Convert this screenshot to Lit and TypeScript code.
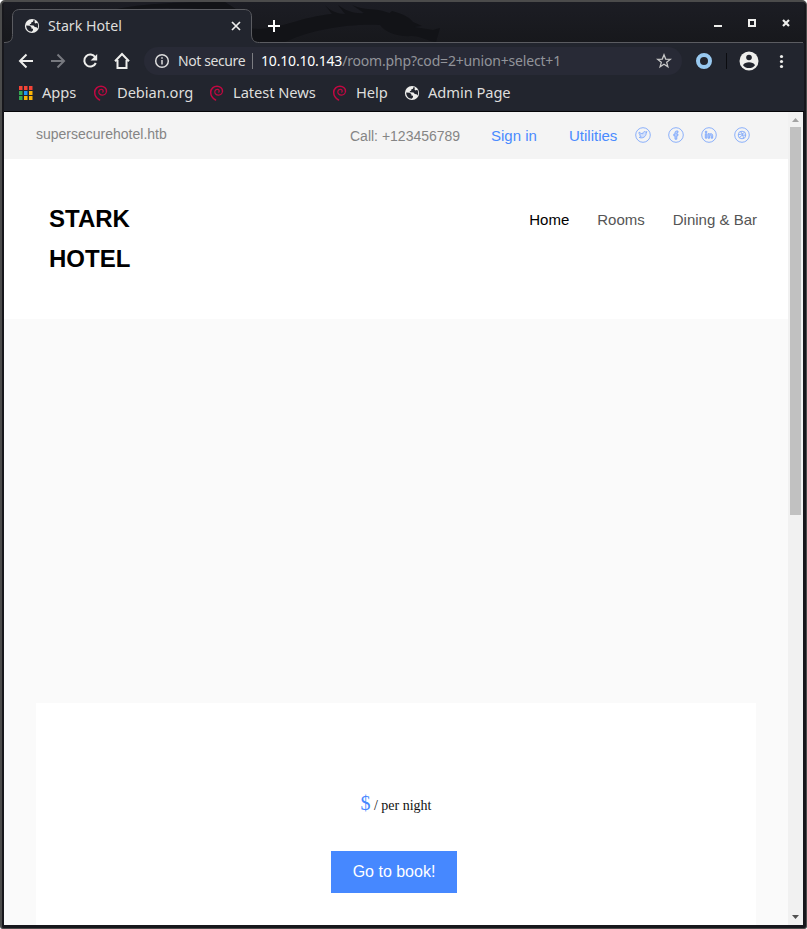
import { LitElement, html, css, svg } from "lit";
import { customElement } from "lit/decorators.js";

const globe = html`<svg class="i16" viewBox="0 0 16 16">
  <circle cx="8" cy="8" r="7.1" fill="#eeeeec" />
  <path d="M2.200 7.400 5.800 7.700 7.400 9.300v1.200l1.600.3v1.500l-1.300 1.400C4.600 13.500 2.100 11 2.200 7.400z" fill="#22252e" />
  <path d="M9.300 2.300 9 3.800 7.200 4.400v1.400l-1.500.4.4 1.100 3.400.1 1.300 1.600 1.800.2.900 1.300c1-1.800.9-4-.3-5.700l-1.700.6-1-.9.400-1.900z" fill="#22252e" />
</svg>`;

const swirl = html`<svg class="i16" viewBox="0 0 16 16" fill="none" stroke="#c10841" stroke-linecap="round">
  <path stroke-width="1.500" d="M6.600 15C4 13.500 1.700 11 1.700 7.500 1.700 3.500 4.800 1.200 8 1.200c3.300 0 5.600 2.300 5.500 5" />
  <path stroke-width="1.200" d="M13.500 6.200c-.1 2.500-2 4-4 3.900-2.500-.2-3.900-1.700-3.700-3.400.2-1.600 1.600-2.600 3-2.300 1.400.3 1.800 1.800 1 2.700" />
</svg>`;

const ring = (mark: unknown) => html`<svg class="social" viewBox="0 0 16 16" fill="none" stroke="#7fa8fb" stroke-width=".9">
  <circle cx="8" cy="8" r="7.300" />${mark}
</svg>`;

const marks = [
  svg`<path fill="#d3e0fb" d="M4.200 5c1 1.200 2.200 1.700 3.700 1.700C7.800 5 9.500 4 10.700 5l1.300-.3-.8 1.500c0 3.300-3.500 5.800-7 4.200l2-.8-1.700-1.600.7-.2-1.200-1.400z"/>`,
  svg`<path fill="#b9cffb" d="M7 12.200V8.800H5.800V7.100H7V5.800C7 4.400 7.700 3.800 10 4v1.600c-1 0-1.200.1-1.200.7v.8h1.200l-.2 1.700h-1v3.400z"/>`,
  svg`<path fill="#b9cffb" d="M4.300 6.700h1.500v4.500H4.300zM4.300 4.300h1.500v1.200H4.300zM7 6.700h1.400v.5c1-.9 3.300-.7 3.300 1.300v2.700h-1.500V8.800c0-1-1.600-1-1.600 0v2.400H7z"/>`,
  svg`<circle cx="8" cy="8" r="3.800"/><path d="M6.500 4.600c1.800 2 2.800 4.300 3 6.900M4.300 7.500c2.800.1 4.800-.6 6.200-2.300M5.500 10.800C7 8.300 9.200 7.600 11.700 8.300"/>`,
];

const squares = ["#f44336", "#f44336", "#f44336", "#34a853", "#2196f3", "#fbb506", "#34a853", "#fbb506", "#fbb506"];

@customElement("app-root")
export class AppRoot extends LitElement {
  static styles = css`
    :host { display: block; width: 807px; height: 929px; overflow: hidden; background: #fff; }
    * { box-sizing: border-box; }
    svg { display: block; flex: none; overflow: visible; }
    .window { height: 929px; border-radius: 5px 5px 3px 3px; background: #17171c; border: solid #4b4b4b; border-width: 2px 1px 1px 2px; padding: 0 2px 3px 2px; overflow: hidden; display: flex; flex-direction: column; }
    .chrome { font: 14.700px/20px "Noto Sans", sans-serif; color: #dededc; flex: none; height: 110px; border-bottom: 1px solid #050508; background: #22252e; }
    .tabs { height: 41px; position: relative; display: flex; background: linear-gradient(#1c1d24, #17181c); }
    .art { position: absolute; left: 0; top: 0; overflow: hidden; }
    .tab { position: relative; margin-left: 8px; width: 240px; display: flex; align-items: center; padding: 7px 9px 0 12px; }
    .tab .name { margin-left: 8px; flex: 1; font-size: 14.200px; }
    .plus { position: relative; margin: 18px 0 0 16px; }
    .controls { position: relative; margin: 15px 13px 0 auto; }
    .tools { display: flex; height: 36px; align-items: center; padding-left: 14px; }
    .nav { width: 126px; }
    .address { width: 538px; height: 28px; border-radius: 14px; background: #282a36; display: flex; align-items: center; padding-left: 10px; font-size: 14px; white-space: nowrap; }
    .secure { width: 67px; margin-left: 8px; letter-spacing: -.4px; }
    .rule { width: 1px; height: 16px; background: #7c7d82; margin: 0 8px 0 7px; }
    .url { width: 395px; color: #92949a; letter-spacing: -.18px; }
    .url b { font-weight: 400; color: #fff; }
    .marks { display: flex; align-items: center; height: 28px; padding-left: 15px; white-space: nowrap; }
    .mark { display: flex; align-items: center; }
    .mark span { letter-spacing: -.07px; margin-top: -2px; }
    .i16 { width: 16px; height: 16px; }
    .page { flex: 1; display: flex; min-height: 0; font: 14px/20px "Liberation Sans", Arial, sans-serif; }
    .body { width: 784px; background: #fafafa; overflow: hidden; }
    .top { height: 47px; background: #f4f4f4; display: flex; padding: 12px 0 0 32px; color: #858585; white-space: nowrap; }
    .host { width: 314px; }
    .call { width: 141px; padding-top: 2px; }
    .link { padding-top: 2px; font-size: 15px; color: #4a8bff; }
    .sign { width: 78px; }
    .util { width: 66px; }
    .social { width: 16px; height: 16px; margin: 2.500px 16.900px 0 0; }
    .head { height: 160px; background: #fff; display: flex; padding: 40px 31px 0 45px; justify-content: space-between; }
    .logo { margin: 0; width: 90px; font: 700 24px/40px "Liberation Sans", Arial, sans-serif; color: #000; }
    .menu { display: flex; gap: 28px; padding-top: 11px; font-size: 15px; color: #555; }
    .menu .on { color: #000; }
    .card { margin: 384px 32px 0; height: 240px; background: #fff; display: flex; flex-direction: column; align-items: center; padding-top: 87px; }
    .price { font: 14px/26px "Liberation Serif", "Times New Roman", serif; color: #111; }
    .price span { font-size: 20px; color: #4688ff; }
    .book { border: 0; margin: 32px 4px 0 0; width: 126px; height: 42px; background: #4688ff; color: #fff; font: 16px/42px "Liberation Sans", Arial, sans-serif; text-align: center; padding: 0; }
    .scroll { width: 15px; background: #f1f1f1; display: flex; flex-direction: column; align-items: center; }
    .thumb { width: 11px; height: 388px; background: #c1c1c1; margin-bottom: auto; }
  `;

  render() {
    return html`<div class="window">
      <div class="chrome">
        <div class="tabs">
          <svg class="art" width="799" height="41" viewBox="4 2 799 41">
            <path fill="#121317" d="M105 12c30-9 75-10 120-10l14 9h-15c-40-4-80-4-119 1zM248 28c25 5 50-11 84-14l-7-9c5 6 13 9 20 9l-7-9c8 6 17 9 26 8l-12-8c12 6 24 3 34 7l7 2-9 4 8-7c12 3 18 7 21 11l9 4-8 1 19 3 7-2-4 14c-7 0-14-6-24-6-15 1-27-4-32-11-30-2-68 5-88 14-16 8-31 7-44 0z" />
            <path fill="#22252e" stroke="#5b5c61" d="M0 42.500h4c6 0 8.500-2 8.500-8V17c0-5 2.500-7.500 7.500-7.500h224c5 0 7.500 2.500 7.500 7.500v17c0 6 2.500 8.500 8 8.500H810V50H0z" />
          </svg>
          <div class="tab">${globe}<span class="name">Stark Hotel</span>
            <svg width="14" height="14" viewBox="0 0 14 14" stroke="#eee" stroke-width="1.700"><path d="m3 3 8 8M11 3l-8 8" /></svg>
          </div>
          <svg class="plus" width="12" height="12" stroke="#fff" stroke-width="2"><path d="M6 0v12M0 6h12" /></svg>
          <svg class="controls" width="77" height="12" viewBox="0 0 77 12" fill="none" stroke="#eeeeec" stroke-width="2">
            <path d="M0 9h8" /><path d="M35 3h6v6h-6z" /><path d="m69 3 6 6M75 3l-6 6" stroke-width="2.200" />
          </svg>
        </div>
        <div class="tools">
          <svg class="nav" height="18" viewBox="18 52 126 18" fill="none" stroke="#eeeeec" stroke-width="2">
            <path d="M33 61H20.500M26.500 54.500 20 61l6.500 6.500" />
            <path stroke="#77797f" d="M51 61h12.500M57.500 54.500 64 61l-6.500 6.500" />
            <path d="M95.300 57.200A6 6 0 1 0 95.800 63" /><path d="M97.200 54v6.600h-6.600z" fill="#eeeeec" stroke="none" />
            <path d="M115 61.300 122 54l7 7.300M117.500 60v8h9v-8" />
          </svg>
          <div class="address">
            <svg class="i16" viewBox="0 0 16 16" fill="none" stroke="#ddd" stroke-width="1.500"><circle cx="8" cy="8" r="6.300" /><path d="M8 7v4.500M8 4.300v1.500" /></svg>
            <span class="secure">Not secure</span><i class="rule"></i>
            <span class="url"><b>10.10.10.143</b>/room.php?cod=2+union+select+1</span>
            <svg class="i16" viewBox="0 0 16 16" fill="none" stroke="#c8c8c8" stroke-width="1.300"><path d="m8 1.800 1.700 4.300 4.600.3-3.600 2.900 1.200 4.500L8 11.300l-3.900 2.500 1.200-4.500-3.600-2.900 4.600-.3z" /></svg>
          </div>
          <svg width="121" height="22" viewBox="682 50 121 22" fill="none">
            <circle cx="704" cy="61" r="6" stroke="#98c9f0" stroke-width="4" />
            <path d="M726.500 53v16" stroke="#0b0c10" />
            <circle cx="749" cy="61" r="9.500" fill="#eeeeec" /><circle cx="749" cy="57.500" r="2.800" fill="#22252e" /><path d="M743 65.200c2-3.800 10-3.800 12 0-2.800 3.800-9.200 3.800-12 0z" fill="#22252e" />
            <g fill="#eeeeec"><circle cx="781.500" cy="56.500" r="1.600" /><circle cx="781.500" cy="61.500" r="1.600" /><circle cx="781.500" cy="66.500" r="1.600" /></g>
          </svg>
        </div>
        <div class="marks">
          <svg width="23" height="14" viewBox="0 0 23 14">${squares.map((c, i) => svg`<rect x=${(i % 3) * 5} y=${Math.floor(i / 3) * 5} width="3.500" height="4" fill=${c} />`)}</svg>
          ${this.mark("Apps", 51, null)}${this.mark("Debian.org", 92, swirl)}${this.mark("Latest News", 99, swirl)}${this.mark("Help", 48, swirl)}${this.mark("Admin Page", 90, globe)}
        </div>
      </div>
      <div class="page">
        <div class="body">
          <div class="top">
            <span class="host">supersecurehotel.htb</span><span class="call">Call: +123456789</span>
            <span class="link sign">Sign in</span><span class="link util">Utilities</span>${marks.map(ring)}
          </div>
          <div class="head">
            <h1 class="logo">STARK HOTEL</h1>
            <div class="menu"><span class="on">Home</span><span>Rooms</span><span>Dining &amp; Bar</span></div>
          </div>
          <div class="card">
            <div class="price"><span>$</span> / per night</div>
            <button class="book">Go to book!</button>
          </div>
        </div>
        <div class="scroll">
          <svg width="15" height="15"><path d="M4 10h7L7.500 6z" fill="#a3a3a3" /></svg>
          <div class="thumb"></div>
          <svg width="15" height="15"><path d="M4 5h7L7.500 9z" fill="#505050" /></svg>
        </div>
      </div>
    </div>`;
  }

  private mark(label: string, width: number, icon: unknown) {
    return html`<div class="mark">${icon}<span style="width:${width}px;margin-left:${icon ? 8 : 0}px">${label}</span></div>`;
  }
}
